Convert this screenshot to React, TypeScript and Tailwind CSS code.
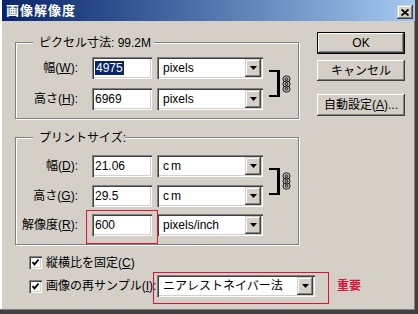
import React from 'react';

const sunken =
  'shadow-[inset_1px_1px_0_#808080,inset_2px_2px_0_#404040,inset_-1px_-1px_0_#ffffff,inset_-2px_-2px_0_#d4d0c8]';
const raised =
  'shadow-[inset_-1px_-1px_0_#404040,inset_1px_1px_0_#ffffff,inset_-2px_-2px_0_#808080,inset_2px_2px_0_#d4d0c8]';
const comboBtn =
  'shadow-[inset_-1px_-1px_0_#404040,inset_1px_1px_0_#d4d0c8,inset_-2px_-2px_0_#808080,inset_2px_2px_0_#ffffff]';

function Arrow() {
  return (
    <svg width="7" height="4" viewBox="0 0 7 4">
      <polygon points="0,0 7,0 3.5,4" fill="#000" />
    </svg>
  );
}

function Field({ value, selected }: { value: string; selected?: boolean }) {
  return (
    <div className={`w-[60px] h-[22px] bg-white ${sunken} flex items-center pl-[3px] text-[12px] leading-none`}>
      {selected ? <span className="bg-[#0a246a] text-white px-[1px] py-[1px]">{value}</span> : value}
    </div>
  );
}

function Combo({ text, width, wide }: { text: string; width: string; wide?: boolean }) {
  return (
    <div className={`${width} shrink-0 h-[22px] bg-white ${sunken} flex items-center`}>
      <span className={`flex-1 pl-[6px] text-[12px] leading-none whitespace-nowrap ${wide ? 'tracking-[2px]' : ''}`}>{text}</span>
      <div className={`w-[16px] h-[18px] mr-[2px] shrink-0 bg-[#d4d0c8] ${comboBtn} flex items-center justify-center`}>
        <Arrow />
      </div>
    </div>
  );
}

function Row({
  name,
  keyChar,
  value,
  unit,
  selected,
  wide,
}: {
  name: string;
  keyChar: string;
  value: string;
  unit: string;
  selected?: boolean;
  wide?: boolean;
}) {
  return (
    <div className="flex items-center h-[22px]">
      <div className="w-[62px] shrink-0 text-right text-[12px] leading-none whitespace-nowrap">
        {name}(<span className="underline">{keyChar}</span>):
      </div>
      <div className="ml-[14px] shrink-0">
        <Field value={value} selected={selected} />
      </div>
      <div className="ml-[5px] shrink-0">
        <Combo text={unit} width="w-[106px]" wide={wide} />
      </div>
    </div>
  );
}

function Chain() {
  return (
    <svg width="9" height="18" viewBox="0 0 9 18" fill="none" stroke="#000" strokeWidth="0.9">
      <ellipse cx="4.5" cy="4" rx="3.6" ry="3.2" />
      <ellipse cx="4.5" cy="9" rx="3.6" ry="3.2" />
      <ellipse cx="4.5" cy="14" rx="3.6" ry="3.2" />
      <ellipse cx="4.5" cy="4" rx="1.6" ry="1.1" />
      <ellipse cx="4.5" cy="9" rx="1.6" ry="1.1" />
      <ellipse cx="4.5" cy="14" rx="1.6" ry="1.1" />
    </svg>
  );
}

function Link() {
  return (
    <div className="flex items-center ml-[6px] shrink-0">
      <div className="w-[11px] h-[27px] border-t-2 border-b-2 border-r-[3px] border-black" />
      <div className="ml-[2px]">
        <Chain />
      </div>
    </div>
  );
}

function Group({ title, legendWidth, className, children }: { title: string; legendWidth: string; className: string; children: React.ReactNode }) {
  return (
    <div className={`relative border border-[#808080] shadow-[inset_1px_1px_0_#ffffff,1px_1px_0_#ffffff] ${className}`}>
      <div className={`absolute -top-[7px] left-[17px] ${legendWidth} bg-[#d4d0c8] pl-[6px] text-[12px] leading-[14px] whitespace-nowrap`}>
        {title}
      </div>
      {children}
    </div>
  );
}

function Check() {
  return (
    <div className={`w-[13px] h-[13px] shrink-0 bg-white ${sunken} flex items-center justify-center`}>
      <svg width="9" height="9" viewBox="0 0 9 9">
        <path d="M1.5 4 L3.5 6.5 L7.5 1.5" fill="none" stroke="#000" strokeWidth="2" />
      </svg>
    </div>
  );
}

function Button({ children, primary, className }: { children: React.ReactNode; primary?: boolean; className: string }) {
  return (
    <div className={`w-[88px] bg-[#d4d0c8] ${primary ? 'border border-black' : ''} ${className}`}>
      <div className={`w-full h-full ${raised} flex items-center justify-center text-[12px] leading-none`}>{children}</div>
    </div>
  );
}

export default function App() {
  return (
    <div
      className="w-[418px] h-[314px] bg-[#d4d0c8] text-black font-['Liberation_Sans','Noto_Sans_CJK_JP',sans-serif] shadow-[inset_-3px_-4px_0_#404040,inset_-4px_-5px_0_#808080,inset_2px_0_0_#ffffff,inset_1px_0_0_#d4d0c8] overflow-hidden"
    >
      <div className="h-[21px] ml-[2px] mr-[3px] bg-gradient-to-r from-[#0a246a] to-[#a6caf0] flex items-start">
        <span className="mt-[4px] ml-[4px] text-white font-bold text-[13px] leading-[14px] tracking-[1px]">画像解像度</span>
        <div className={`ml-auto mt-[5px] mr-[2px] w-[16px] h-[14px] bg-[#d4d0c8] ${comboBtn} flex items-center justify-center`}>
          <svg width="8" height="7" viewBox="0 0 8 7">
            <path d="M0.5 0.5 L7.5 6.5 M7.5 0.5 L0.5 6.5" stroke="#000" strokeWidth="1.8" />
          </svg>
        </div>
      </div>

      <div className="flex">
        <div className="ml-[15px] w-[284px] shrink-0">
          <Group title="ピクセル寸法: 99.2M" legendWidth="w-[121px]" className="mt-[21px] h-[77px] pt-[14px]">
            <div className="flex items-center">
              <div className="flex flex-col gap-[9px]">
                <Row name="幅" keyChar="W" value="4975" unit="pixels" selected />
                <Row name="高さ" keyChar="H" value="6969" unit="pixels" />
              </div>
              <Link />
            </div>
          </Group>

          <Group title="プリントサイズ:" legendWidth="w-[92px]" className="mt-[18px] h-[108px] pt-[17px]">
            <div className="flex items-center">
              <div className="flex flex-col gap-[8px]">
                <Row name="幅" keyChar="D" value="21.06" unit="cm" wide />
                <Row name="高さ" keyChar="G" value="29.5" unit="cm" wide />
              </div>
              <Link />
            </div>
            <div className="relative mt-[7px]">
              <Row name="解像度" keyChar="R" value="600" unit="pixels/inch" />
              <div className="absolute top-[-4px] left-[70px] w-[72px] h-[34px] border border-[#dc143c]" />
            </div>
          </Group>

          <div className="mt-[11px] ml-[14px] flex items-center h-[13px] text-[12px] leading-none">
            <Check />
            <span className="ml-[4px] whitespace-nowrap">
              縦横比を固定(<span className="underline">C</span>)
            </span>
          </div>

          <div className="mt-[6px] ml-[14px] flex items-center h-[22px] text-[12px] leading-none">
            <Check />
            <span className="ml-[4px] w-[111px] shrink-0 whitespace-nowrap">
              画像の再サンプル(<span className="underline">I</span>):
            </span>
            <div className="relative shrink-0">
              <Combo text="ニアレストネイバー法" width="w-[158px]" />
              <div className="absolute top-[-3px] left-[-4px] w-[176px] h-[32px] border border-[#dc143c]" />
            </div>
            <span className="ml-[22px] shrink-0 text-[#dc143c] font-bold whitespace-nowrap">重要</span>
          </div>
        </div>

        <div className="ml-[18px] flex flex-col shrink-0">
          <Button primary className="mt-[11px] h-[22px]">OK</Button>
          <Button className="mt-[6px] h-[21px]">キャンセル</Button>
          <Button className="mt-[13px] h-[22px]">
            <span>
              自動設定(<span className="underline">A</span>)...
            </span>
          </Button>
        </div>
      </div>
    </div>
  );
}
